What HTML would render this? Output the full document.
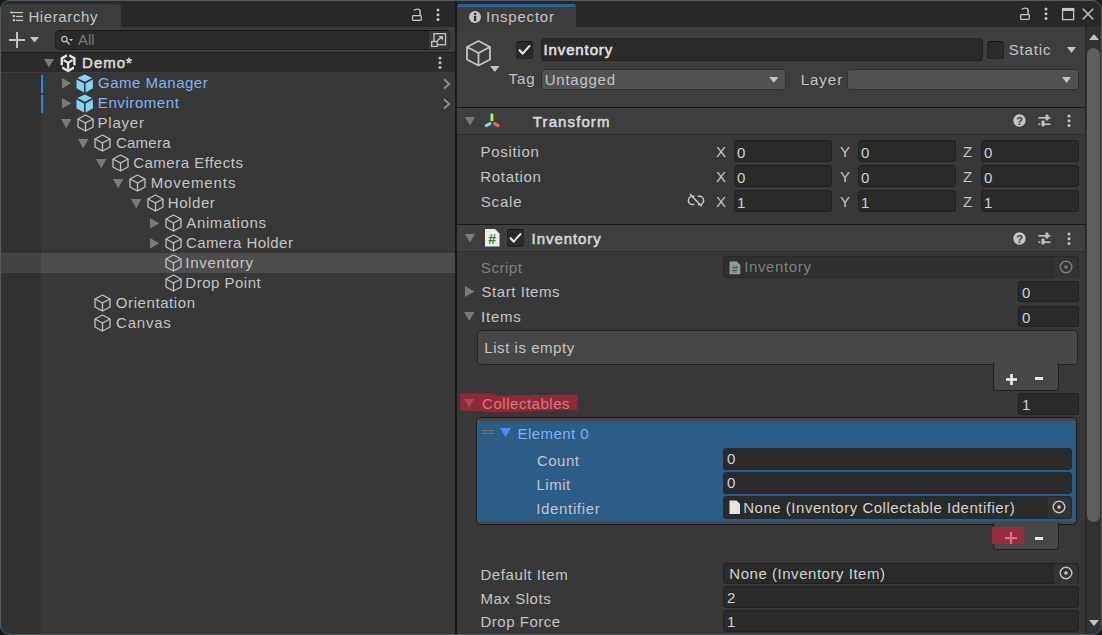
<!DOCTYPE html><html><head><meta charset="utf-8"><style>
html,body{margin:0;padding:0;width:1102px;height:635px;overflow:hidden;background:#1b1b1b;}
body{position:relative;font-family:"Liberation Sans",sans-serif;}
.r{position:absolute;display:block;}
.t{position:absolute;white-space:nowrap;line-height:20px;height:20px;font-size:15px;}
</style></head><body>
<div class="r" style="left:0px;top:0px;width:1102px;height:635px;background:#4a5761;border-radius:8px;"></div>
<div class="r" style="left:1px;top:1px;width:1100px;height:633px;background:#282828;border-radius:7px;overflow:hidden;"></div>
<div class="r" style="left:1px;top:4px;width:120px;height:23px;background:#3c3c3c;border-radius:6px 4px 0 0;"></div>
<svg class="r" style="left:9px;top:10px;" width="16" height="13" viewBox="0 0 16 13"><polygon points="0.7,2.5 3.4,0.8 3.4,4.1" fill="#c8c8c8"/><rect x="3.3" y="1.95" width="10.8" height="1.2" fill="#c8c8c8"/><rect x="3.8" y="5.1" width="2.2" height="2.1" fill="#c8c8c8"/><rect x="6.9" y="5.85" width="7.2" height="1.2" fill="#c8c8c8"/><rect x="3.8" y="9.1" width="2.2" height="2.1" fill="#c8c8c8"/><rect x="6.9" y="9.8" width="7.2" height="1.25" fill="#c8c8c8"/></svg>
<div class="t" style="left:28.45px;top:6.5px;color:#c4c4c4;font-size:15px;letter-spacing:0.601px;">Hierarchy</div>
<svg class="r" style="left:411px;top:8px;" width="12" height="14" viewBox="0 0 12 14"><rect x="1.6" y="7.5" width="8.7" height="4.9" rx="0.8" fill="none" stroke="#c8c8c8" stroke-width="1.25"/><path d="M2.9 2.6 Q4.6 0.9 6.8 1.1 Q9.1 1.2 9.1 3.4 L9.1 7.3" fill="none" stroke="#c8c8c8" stroke-width="1.4"/></svg>
<svg class="r" style="left:435px;top:8px;" width="6" height="14" viewBox="0 0 6 14"><circle cx="3" cy="2.0" r="1.5" fill="#c4c4c4"/><circle cx="3" cy="6.7" r="1.5" fill="#c4c4c4"/><circle cx="3" cy="11.4" r="1.5" fill="#c4c4c4"/></svg>
<div class="r" style="left:1px;top:27px;width:454px;height:25px;background:#3c3c3c;"></div>
<div class="r" style="left:9px;top:39px;width:15.5px;height:2px;background:#c4c4c4;"></div>
<div class="r" style="left:15.8px;top:32.3px;width:2px;height:15.4px;background:#c4c4c4;"></div>
<svg class="r" style="left:30px;top:37px;" width="9" height="5.5" viewBox="0 0 9 5.5"><polygon points="0,0 9,0 4.5,5.5" fill="#c4c4c4"/></svg>
<div class="r" style="left:55px;top:30px;width:395px;height:19.8px;background:#2a2a2a;border-radius:5px;border:1px solid #202020;border-top-color:#151515;box-sizing:border-box;"></div>
<div class="r" style="left:428.5px;top:31px;width:20.5px;height:18px;background:#393939;border-radius:0 4px 4px 0;"></div>
<svg class="r" style="left:60px;top:35px;" width="14" height="11" viewBox="0 0 14 11"><circle cx="4.4" cy="4.1" r="2.7" fill="none" stroke="#c4c4c4" stroke-width="1.3"/><line x1="6.3" y1="6.1" x2="9.6" y2="9.6" stroke="#c4c4c4" stroke-width="1.5"/><polygon points="9,4 13,4 11,6.3" fill="#c4c4c4"/></svg>
<div class="t" style="left:77.88px;top:30px;color:#787878;font-size:15px;letter-spacing:0.000px;">All</div>
<svg class="r" style="left:431px;top:33px;" width="16" height="14" viewBox="0 0 16 14"><rect x="3" y="0.7" width="11.5" height="11" fill="none" stroke="#c4c4c4" stroke-width="1.3"/><rect x="0.7" y="8.5" width="5.5" height="5" fill="#3a3a3a" stroke="#c4c4c4" stroke-width="1.3"/><line x1="6" y1="8" x2="11" y2="3.5" stroke="#c4c4c4" stroke-width="1.4"/><polygon points="7.5,3 12,3 12,7.5" fill="#c4c4c4"/></svg>
<div class="r" style="left:1px;top:52px;width:454px;height:583px;background:#383838;"></div>
<div class="r" style="left:1px;top:52px;width:454px;height:20px;background:#2b2b2b;"></div>
<div class="r" style="left:1px;top:72px;width:454px;height:1px;background:#3d3d3d;"></div>
<div class="r" style="left:1px;top:52px;width:454px;height:1px;background:#1f1f1f;"></div>
<svg class="r" style="left:44px;top:59px;" width="10" height="8.5" viewBox="0 0 10 8.5"><polygon points="0,0 10,0 5.0,8.5" fill="#7a7a7a"/></svg>
<svg class="r" style="left:56px;top:52px;" width="24" height="22" viewBox="0 0 24 22"><g fill="#e6e6e6" stroke="none"><polygon points="4.6,13.2 4.6,5.6 10.6,2.2 11.3,4.6 7.0,7.0 7.0,13.2"/><polygon points="19.6,13.2 19.6,5.6 13.6,2.2 12.9,4.6 17.2,7.0 17.2,13.2"/><polygon points="8.2,7.2 12.1,9.4 16.0,7.2 17.2,9.0 13.3,11.2 13.3,17.5 10.9,17.5 10.9,11.2 7.0,9.0"/><polygon points="6.2,14.2 12.1,17.6 18.0,14.2 18.0,17.0 12.1,20.2 6.2,17.0"/></g></svg>
<div class="t" style="left:82.11px;top:52.5px;color:#d8d8d8;-webkit-text-stroke:0.55px currentColor;font-size:15px;letter-spacing:0.999px;">Demo*</div>
<svg class="r" style="left:437px;top:56.2px;" width="6" height="14" viewBox="0 0 6 14"><circle cx="3" cy="2.0" r="1.5" fill="#c4c4c4"/><circle cx="3" cy="6.7" r="1.5" fill="#c4c4c4"/><circle cx="3" cy="11.4" r="1.5" fill="#c4c4c4"/></svg>
<svg class="r" style="left:62.400000000000006px;top:77.8px;" width="9.2" height="10.6" viewBox="0 0 9.2 10.6"><polygon points="0,0 9.2,5.3 0,10.6" fill="#7a7a7a"/></svg>
<svg class="r" style="left:76.4px;top:73.6px;" width="18" height="19" viewBox="0 0 18 19"><polygon points="8.8,0.6 16.2,4.1 8.8,7.8 1.3,4.1" fill="#80d4fa"/><polygon points="0.5,5.6 8.0,9.4 8.0,18.4 0.5,14.3" fill="#80d4fa"/><polygon points="9.6,9.4 16.9,5.6 16.9,14.3 9.6,18.4" fill="#80d4fa"/></svg>
<div class="r" style="left:41px;top:74.5px;width:2px;height:18px;background:#1b8fdc;"></div>
<svg class="r" style="left:441.5px;top:78.3px;" width="9" height="12" viewBox="0 0 9 12"><polyline points="2,1.2 7.3,5.9 2,10.6" fill="none" stroke="#8c8c8c" stroke-width="2"/></svg>
<div class="t" style="left:98.08px;top:73px;color:#80b4f8;font-size:15px;letter-spacing:0.491px;">Game Manager</div>
<svg class="r" style="left:62.400000000000006px;top:97.8px;" width="9.2" height="10.6" viewBox="0 0 9.2 10.6"><polygon points="0,0 9.2,5.3 0,10.6" fill="#7a7a7a"/></svg>
<svg class="r" style="left:76.4px;top:93.6px;" width="18" height="19" viewBox="0 0 18 19"><polygon points="8.8,0.6 16.2,4.1 8.8,7.8 1.3,4.1" fill="#80d4fa"/><polygon points="0.5,5.6 8.0,9.4 8.0,18.4 0.5,14.3" fill="#80d4fa"/><polygon points="9.6,9.4 16.9,5.6 16.9,14.3 9.6,18.4" fill="#80d4fa"/></svg>
<div class="r" style="left:41px;top:94.5px;width:2px;height:18px;background:#1b8fdc;"></div>
<svg class="r" style="left:441.5px;top:98.3px;" width="9" height="12" viewBox="0 0 9 12"><polyline points="2,1.2 7.3,5.9 2,10.6" fill="none" stroke="#8c8c8c" stroke-width="2"/></svg>
<div class="t" style="left:97.85px;top:93px;color:#80b4f8;font-size:15px;letter-spacing:0.573px;">Enviroment</div>
<svg class="r" style="left:60.6px;top:118.6px;" width="10.4" height="9.4" viewBox="0 0 10.4 9.4"><polygon points="0,0 10.4,0 5.2,9.4" fill="#7a7a7a"/></svg>
<svg class="r" style="left:76.7px;top:114px;" width="17" height="18" viewBox="0 0 17 18"><polygon points="8.5,1 16,5 16,13 8.5,17 1,13 1,5" fill="none" stroke="#c2c2c2" stroke-width="1.3" stroke-linejoin="round"/><polyline points="1,5 8.5,9 16,5" fill="none" stroke="#c2c2c2" stroke-width="1.3" stroke-linejoin="round"/><line x1="8.5" y1="9" x2="8.5" y2="17" stroke="#c2c2c2" stroke-width="1.3"/></svg>
<div class="t" style="left:97.55px;top:113px;color:#c4c4c4;font-size:15px;letter-spacing:0.769px;">Player</div>
<svg class="r" style="left:78.16px;top:138.6px;" width="10.4" height="9.4" viewBox="0 0 10.4 9.4"><polygon points="0,0 10.4,0 5.2,9.4" fill="#7a7a7a"/></svg>
<svg class="r" style="left:94.26px;top:134px;" width="17" height="18" viewBox="0 0 17 18"><polygon points="8.5,1 16,5 16,13 8.5,17 1,13 1,5" fill="none" stroke="#c2c2c2" stroke-width="1.3" stroke-linejoin="round"/><polyline points="1,5 8.5,9 16,5" fill="none" stroke="#c2c2c2" stroke-width="1.3" stroke-linejoin="round"/><line x1="8.5" y1="9" x2="8.5" y2="17" stroke="#c2c2c2" stroke-width="1.3"/></svg>
<div class="t" style="left:115.88px;top:133px;color:#c4c4c4;font-size:15px;letter-spacing:0.276px;">Camera</div>
<svg class="r" style="left:95.72px;top:158.6px;" width="10.4" height="9.4" viewBox="0 0 10.4 9.4"><polygon points="0,0 10.4,0 5.2,9.4" fill="#7a7a7a"/></svg>
<svg class="r" style="left:111.82px;top:154px;" width="17" height="18" viewBox="0 0 17 18"><polygon points="8.5,1 16,5 16,13 8.5,17 1,13 1,5" fill="none" stroke="#c2c2c2" stroke-width="1.3" stroke-linejoin="round"/><polyline points="1,5 8.5,9 16,5" fill="none" stroke="#c2c2c2" stroke-width="1.3" stroke-linejoin="round"/><line x1="8.5" y1="9" x2="8.5" y2="17" stroke="#c2c2c2" stroke-width="1.3"/></svg>
<div class="t" style="left:133.18px;top:153px;color:#c4c4c4;font-size:15px;letter-spacing:0.511px;">Camera Effects</div>
<svg class="r" style="left:113.28px;top:178.6px;" width="10.4" height="9.4" viewBox="0 0 10.4 9.4"><polygon points="0,0 10.4,0 5.2,9.4" fill="#7a7a7a"/></svg>
<svg class="r" style="left:129.38px;top:174px;" width="17" height="18" viewBox="0 0 17 18"><polygon points="8.5,1 16,5 16,13 8.5,17 1,13 1,5" fill="none" stroke="#c2c2c2" stroke-width="1.3" stroke-linejoin="round"/><polyline points="1,5 8.5,9 16,5" fill="none" stroke="#c2c2c2" stroke-width="1.3" stroke-linejoin="round"/><line x1="8.5" y1="9" x2="8.5" y2="17" stroke="#c2c2c2" stroke-width="1.3"/></svg>
<div class="t" style="left:150.65px;top:173px;color:#c4c4c4;font-size:15px;letter-spacing:0.909px;">Movements</div>
<svg class="r" style="left:130.84px;top:198.6px;" width="10.4" height="9.4" viewBox="0 0 10.4 9.4"><polygon points="0,0 10.4,0 5.2,9.4" fill="#7a7a7a"/></svg>
<svg class="r" style="left:146.94px;top:194px;" width="17" height="18" viewBox="0 0 17 18"><polygon points="8.5,1 16,5 16,13 8.5,17 1,13 1,5" fill="none" stroke="#c2c2c2" stroke-width="1.3" stroke-linejoin="round"/><polyline points="1,5 8.5,9 16,5" fill="none" stroke="#c2c2c2" stroke-width="1.3" stroke-linejoin="round"/><line x1="8.5" y1="9" x2="8.5" y2="17" stroke="#c2c2c2" stroke-width="1.3"/></svg>
<div class="t" style="left:167.85px;top:193px;color:#c4c4c4;font-size:15px;letter-spacing:0.548px;">Holder</div>
<svg class="r" style="left:150.2px;top:217.8px;" width="9.2" height="10.6" viewBox="0 0 9.2 10.6"><polygon points="0,0 9.2,5.3 0,10.6" fill="#7a7a7a"/></svg>
<svg class="r" style="left:164.5px;top:214px;" width="17" height="18" viewBox="0 0 17 18"><polygon points="8.5,1 16,5 16,13 8.5,17 1,13 1,5" fill="none" stroke="#c2c2c2" stroke-width="1.3" stroke-linejoin="round"/><polyline points="1,5 8.5,9 16,5" fill="none" stroke="#c2c2c2" stroke-width="1.3" stroke-linejoin="round"/><line x1="8.5" y1="9" x2="8.5" y2="17" stroke="#c2c2c2" stroke-width="1.3"/></svg>
<div class="t" style="left:186.35px;top:213px;color:#c4c4c4;font-size:15px;letter-spacing:0.599px;">Animations</div>
<svg class="r" style="left:150.2px;top:237.8px;" width="9.2" height="10.6" viewBox="0 0 9.2 10.6"><polygon points="0,0 9.2,5.3 0,10.6" fill="#7a7a7a"/></svg>
<svg class="r" style="left:164.5px;top:234px;" width="17" height="18" viewBox="0 0 17 18"><polygon points="8.5,1 16,5 16,13 8.5,17 1,13 1,5" fill="none" stroke="#c2c2c2" stroke-width="1.3" stroke-linejoin="round"/><polyline points="1,5 8.5,9 16,5" fill="none" stroke="#c2c2c2" stroke-width="1.3" stroke-linejoin="round"/><line x1="8.5" y1="9" x2="8.5" y2="17" stroke="#c2c2c2" stroke-width="1.3"/></svg>
<div class="t" style="left:185.88px;top:233px;color:#c4c4c4;font-size:15px;letter-spacing:0.441px;">Camera Holder</div>
<div class="r" style="left:1px;top:253px;width:454px;height:20px;background:#4d4d4d;"></div>
<svg class="r" style="left:164.5px;top:254px;" width="17" height="18" viewBox="0 0 17 18"><polygon points="8.5,1 16,5 16,13 8.5,17 1,13 1,5" fill="none" stroke="#c2c2c2" stroke-width="1.3" stroke-linejoin="round"/><polyline points="1,5 8.5,9 16,5" fill="none" stroke="#c2c2c2" stroke-width="1.3" stroke-linejoin="round"/><line x1="8.5" y1="9" x2="8.5" y2="17" stroke="#c2c2c2" stroke-width="1.3"/></svg>
<div class="t" style="left:185.22px;top:253px;color:#c4c4c4;font-size:15px;letter-spacing:0.753px;">Inventory</div>
<svg class="r" style="left:164.5px;top:274px;" width="17" height="18" viewBox="0 0 17 18"><polygon points="8.5,1 16,5 16,13 8.5,17 1,13 1,5" fill="none" stroke="#c2c2c2" stroke-width="1.3" stroke-linejoin="round"/><polyline points="1,5 8.5,9 16,5" fill="none" stroke="#c2c2c2" stroke-width="1.3" stroke-linejoin="round"/><line x1="8.5" y1="9" x2="8.5" y2="17" stroke="#c2c2c2" stroke-width="1.3"/></svg>
<div class="t" style="left:185.35px;top:273px;color:#c4c4c4;font-size:15px;letter-spacing:0.495px;">Drop Point</div>
<svg class="r" style="left:94.26px;top:294px;" width="17" height="18" viewBox="0 0 17 18"><polygon points="8.5,1 16,5 16,13 8.5,17 1,13 1,5" fill="none" stroke="#c2c2c2" stroke-width="1.3" stroke-linejoin="round"/><polyline points="1,5 8.5,9 16,5" fill="none" stroke="#c2c2c2" stroke-width="1.3" stroke-linejoin="round"/><line x1="8.5" y1="9" x2="8.5" y2="17" stroke="#c2c2c2" stroke-width="1.3"/></svg>
<div class="t" style="left:115.81px;top:293px;color:#c4c4c4;font-size:15px;letter-spacing:0.586px;">Orientation</div>
<svg class="r" style="left:94.26px;top:314px;" width="17" height="18" viewBox="0 0 17 18"><polygon points="8.5,1 16,5 16,13 8.5,17 1,13 1,5" fill="none" stroke="#c2c2c2" stroke-width="1.3" stroke-linejoin="round"/><polyline points="1,5 8.5,9 16,5" fill="none" stroke="#c2c2c2" stroke-width="1.3" stroke-linejoin="round"/><line x1="8.5" y1="9" x2="8.5" y2="17" stroke="#c2c2c2" stroke-width="1.3"/></svg>
<div class="t" style="left:116.08px;top:313px;color:#c4c4c4;font-size:15px;letter-spacing:0.775px;">Canvas</div>
<div class="r" style="left:1px;top:73px;width:40px;height:562px;background:rgba(0,0,0,0.11);"></div>
<div class="r" style="left:455px;top:1px;width:2px;height:634px;background:#191919;"></div>
<div class="r" style="left:457px;top:27px;width:645px;height:608px;background:#383838;"></div>
<div class="r" style="left:457px;top:4px;width:119px;height:23px;background:#3c3c3c;border-radius:5px 5px 0 0;"></div>
<div class="r" style="left:457px;top:4px;width:119px;height:3px;background:#2f6197;border-radius:5px 5px 0 0;"></div>
<svg class="r" style="left:469px;top:11px;" width="12" height="12" viewBox="0 0 12 12"><circle cx="6" cy="6" r="6" fill="#c4c4c4"/><rect x="5" y="5" width="2.2" height="5" fill="#2a2a2a"/><circle cx="6.1" cy="3" r="1.2" fill="#2a2a2a"/></svg>
<div class="t" style="left:486.02px;top:6.5px;color:#c4c4c4;font-size:15px;letter-spacing:0.782px;">Inspector</div>
<svg class="r" style="left:1019px;top:6.5px;" width="12" height="14" viewBox="0 0 12 14"><rect x="1.6" y="7.5" width="8.7" height="4.9" rx="0.8" fill="none" stroke="#c8c8c8" stroke-width="1.25"/><path d="M2.9 2.6 Q4.6 0.9 6.8 1.1 Q9.1 1.2 9.1 3.4 L9.1 7.3" fill="none" stroke="#c8c8c8" stroke-width="1.4"/></svg>
<svg class="r" style="left:1043px;top:7.199999999999999px;" width="6" height="14" viewBox="0 0 6 14"><circle cx="3" cy="2.0" r="1.5" fill="#c4c4c4"/><circle cx="3" cy="6.7" r="1.5" fill="#c4c4c4"/><circle cx="3" cy="11.4" r="1.5" fill="#c4c4c4"/></svg>
<svg class="r" style="left:1061px;top:7px;" width="14" height="14" viewBox="0 0 14 14"><rect x="1.6" y="1.6" width="11" height="11" fill="none" stroke="#c4c4c4" stroke-width="1.3"/><rect x="1" y="1" width="12.3" height="3" fill="#c4c4c4"/></svg>
<svg class="r" style="left:1082px;top:8px;" width="12" height="12" viewBox="0 0 12 12"><line x1="0.8" y1="0.8" x2="11.2" y2="11.2" stroke="#c4c4c4" stroke-width="1.5"/><line x1="11.2" y1="0.8" x2="0.8" y2="11.2" stroke="#c4c4c4" stroke-width="1.5"/></svg>
<div class="r" style="left:457px;top:27px;width:629px;height:80px;background:#3e3e3e;"></div>
<svg class="r" style="left:465.5px;top:40px;" width="25" height="27" viewBox="0 0 25 27"><g fill="none" stroke="#c4c4c4" stroke-width="1.8" stroke-linejoin="round"><polygon points="12.5,1 24,7 24,19.5 12.5,25.5 1,19.5 1,7"/><polyline points="1,7 12.5,13 24,7"/><line x1="12.5" y1="13" x2="12.5" y2="25.5"/></g></svg>
<svg class="r" style="left:490px;top:66px;" width="9.5" height="6" viewBox="0 0 9.5 6"><polygon points="0,0 9.5,0 4.75,6" fill="#c4c4c4"/></svg>
<div class="r" style="left:516px;top:41px;width:17px;height:17.6px;background:#2a2a2a;border-radius:3px;border:1px solid #222;border-top-color:#141414;box-sizing:border-box;"></div>
<svg class="r" style="left:516px;top:41px;" width="17" height="17" viewBox="0 0 17 17"><polyline points="3.6,9.2 6.6,12.6 13.4,5.1" fill="none" stroke="#ececec" stroke-width="2.1" stroke-linecap="round" stroke-linejoin="round"/></svg>
<div class="r" style="left:541px;top:38px;width:442px;height:23px;background:#2a2a2a;border:1px solid #212121;box-sizing:border-box;border-radius:3px;"></div>
<div class="t" style="left:543.51px;top:39.5px;color:#e0e0e0;-webkit-text-stroke:0.55px currentColor;font-size:15px;letter-spacing:0.879px;">Inventory</div>
<div class="r" style="left:987px;top:41px;width:17px;height:17.6px;background:#2a2a2a;border-radius:3px;border:1px solid #222;border-top-color:#141414;box-sizing:border-box;"></div>
<div class="t" style="left:1008.77px;top:40px;color:#c4c4c4;font-size:15px;letter-spacing:0.820px;">Static</div>
<svg class="r" style="left:1067px;top:46.5px;" width="9" height="6" viewBox="0 0 9 6"><polygon points="0,0 9,0 4.5,6" fill="#c4c4c4"/></svg>
<div class="t" style="left:508.44px;top:69px;color:#c4c4c4;font-size:15px;letter-spacing:1.000px;">Tag</div>
<div class="r" style="left:541px;top:68.5px;width:245px;height:21.7px;background:#515151;border:1px solid #303030;box-sizing:border-box;border-radius:3px;"></div>
<div class="t" style="left:544.79px;top:70px;color:#c4c4c4;font-size:15px;letter-spacing:0.743px;">Untagged</div>
<svg class="r" style="left:768.7px;top:77px;" width="9.6" height="5.8" viewBox="0 0 9.6 5.8"><polygon points="0,0 9.6,0 4.8,5.8" fill="#c4c4c4"/></svg>
<div class="t" style="left:800.67px;top:69.5px;color:#c4c4c4;font-size:15px;letter-spacing:1.000px;">Layer</div>
<div class="r" style="left:847px;top:68.5px;width:232px;height:21.7px;background:#515151;border:1px solid #303030;box-sizing:border-box;border-radius:3px;"></div>
<svg class="r" style="left:1062px;top:77px;" width="9" height="6" viewBox="0 0 9 6"><polygon points="0,0 9,0 4.5,6" fill="#c4c4c4"/></svg>
<div class="r" style="left:457px;top:107px;width:629px;height:1px;background:#1a1a1a;"></div>
<div class="r" style="left:457px;top:108px;width:629px;height:26px;background:#3e3e3e;"></div>
<div class="r" style="left:457px;top:134px;width:629px;height:1px;background:#2e2e2e;"></div>
<svg class="r" style="left:465px;top:117px;" width="10" height="8.5" viewBox="0 0 10 8.5"><polygon points="0,0 10,0 5.0,8.5" fill="#7a7a7a"/></svg>
<svg class="r" style="left:483px;top:112px;" width="18" height="16" viewBox="0 0 18 16"><g stroke-linecap="round" stroke-width="3"><line x1="8.9" y1="2.8" x2="8.9" y2="7.7" stroke="#a6f54a"/><line x1="3.3" y1="13.6" x2="6.9" y2="11.6" stroke="#7fd6fb"/><line x1="11.5" y1="11.6" x2="15.1" y2="13.6" stroke="#f76a3a"/></g></svg>
<div class="t" style="left:532.85px;top:112px;color:#d8d8d8;-webkit-text-stroke:0.55px currentColor;font-size:15px;letter-spacing:1.100px;">Transform</div>
<svg class="r" style="left:1012.5px;top:113.7px;" width="13" height="13" viewBox="0 0 13 13"><circle cx="6.5" cy="6.5" r="6.2" fill="#c4c4c4"/><text x="6.5" y="10.6" font-family="Liberation Sans" font-weight="bold" font-size="11" text-anchor="middle" fill="#3e3e3e">?</text></svg>
<svg class="r" style="left:1037.5px;top:113.7px;" width="13" height="13" viewBox="0 0 13 13"><g fill="#c4c4c4"><rect x="0.5" y="3" width="12" height="1.6"/><rect x="7.5" y="0.5" width="3" height="6" rx="1"/><rect x="0.5" y="9.4" width="1.8" height="1.6"/><rect x="4" y="9.4" width="8.5" height="1.6"/><rect x="3.5" y="6.5" width="3" height="6" rx="1"/></g></svg>
<svg class="r" style="left:1066px;top:113.7px;" width="6" height="14" viewBox="0 0 6 14"><circle cx="3" cy="2.0" r="1.5" fill="#c4c4c4"/><circle cx="3" cy="6.7" r="1.5" fill="#c4c4c4"/><circle cx="3" cy="11.4" r="1.5" fill="#c4c4c4"/></svg>
<div class="t" style="left:480.45px;top:142px;color:#c4c4c4;font-size:15px;letter-spacing:0.717px;">Position</div>
<div class="t" style="left:716.00px;top:142px;color:#c4c4c4;font-size:15px;letter-spacing:0.500px;">X</div>
<div class="r" style="left:734px;top:140px;width:98px;height:22px;background:#2a2a2a;border:1px solid #212121;box-sizing:border-box;border-radius:3px;"></div>
<div class="t" style="left:737.00px;top:142.5px;color:#d2d2d2;font-size:15px;letter-spacing:0.500px;">0</div>
<div class="t" style="left:840.00px;top:142px;color:#c4c4c4;font-size:15px;letter-spacing:0.500px;">Y</div>
<div class="r" style="left:858px;top:140px;width:98px;height:22px;background:#2a2a2a;border:1px solid #212121;box-sizing:border-box;border-radius:3px;"></div>
<div class="t" style="left:861.00px;top:142.5px;color:#d2d2d2;font-size:15px;letter-spacing:0.500px;">0</div>
<div class="t" style="left:963.00px;top:142px;color:#c4c4c4;font-size:15px;letter-spacing:0.500px;">Z</div>
<div class="r" style="left:981px;top:140px;width:98px;height:22px;background:#2a2a2a;border:1px solid #212121;box-sizing:border-box;border-radius:3px;"></div>
<div class="t" style="left:984.00px;top:142.5px;color:#d2d2d2;font-size:15px;letter-spacing:0.500px;">0</div>
<div class="t" style="left:480.35px;top:167px;color:#c4c4c4;font-size:15px;letter-spacing:0.672px;">Rotation</div>
<div class="t" style="left:716.00px;top:167px;color:#c4c4c4;font-size:15px;letter-spacing:0.500px;">X</div>
<div class="r" style="left:734px;top:165px;width:98px;height:22px;background:#2a2a2a;border:1px solid #212121;box-sizing:border-box;border-radius:3px;"></div>
<div class="t" style="left:737.00px;top:167.5px;color:#d2d2d2;font-size:15px;letter-spacing:0.500px;">0</div>
<div class="t" style="left:840.00px;top:167px;color:#c4c4c4;font-size:15px;letter-spacing:0.500px;">Y</div>
<div class="r" style="left:858px;top:165px;width:98px;height:22px;background:#2a2a2a;border:1px solid #212121;box-sizing:border-box;border-radius:3px;"></div>
<div class="t" style="left:861.00px;top:167.5px;color:#d2d2d2;font-size:15px;letter-spacing:0.500px;">0</div>
<div class="t" style="left:963.00px;top:167px;color:#c4c4c4;font-size:15px;letter-spacing:0.500px;">Z</div>
<div class="r" style="left:981px;top:165px;width:98px;height:22px;background:#2a2a2a;border:1px solid #212121;box-sizing:border-box;border-radius:3px;"></div>
<div class="t" style="left:984.00px;top:167.5px;color:#d2d2d2;font-size:15px;letter-spacing:0.500px;">0</div>
<div class="t" style="left:480.77px;top:192px;color:#c4c4c4;font-size:15px;letter-spacing:0.814px;">Scale</div>
<div class="t" style="left:716.00px;top:192px;color:#c4c4c4;font-size:15px;letter-spacing:0.500px;">X</div>
<div class="r" style="left:734px;top:190px;width:98px;height:22px;background:#2a2a2a;border:1px solid #212121;box-sizing:border-box;border-radius:3px;"></div>
<div class="t" style="left:737.00px;top:192.5px;color:#d2d2d2;font-size:15px;letter-spacing:0.500px;">1</div>
<div class="t" style="left:840.00px;top:192px;color:#c4c4c4;font-size:15px;letter-spacing:0.500px;">Y</div>
<div class="r" style="left:858px;top:190px;width:98px;height:22px;background:#2a2a2a;border:1px solid #212121;box-sizing:border-box;border-radius:3px;"></div>
<div class="t" style="left:861.00px;top:192.5px;color:#d2d2d2;font-size:15px;letter-spacing:0.500px;">1</div>
<div class="t" style="left:963.00px;top:192px;color:#c4c4c4;font-size:15px;letter-spacing:0.500px;">Z</div>
<div class="r" style="left:981px;top:190px;width:98px;height:22px;background:#2a2a2a;border:1px solid #212121;box-sizing:border-box;border-radius:3px;"></div>
<div class="t" style="left:984.00px;top:192.5px;color:#d2d2d2;font-size:15px;letter-spacing:0.500px;">1</div>
<svg class="r" style="left:686px;top:192px;" width="20" height="17" viewBox="0 0 20 17"><g fill="none" stroke="#c8c8c8" stroke-width="1.5"><path d="M8.3 4.2 H6.6 a4.2 4.2 0 0 0 0 8.4 H8.3"/><path d="M11.7 4.2 H13.4 a4.2 4.2 0 0 1 0 8.4 H11.7"/><line x1="4" y1="2" x2="15.8" y2="14.5"/></g></svg>
<div class="r" style="left:457px;top:224px;width:629px;height:1px;background:#1a1a1a;"></div>
<div class="r" style="left:457px;top:225px;width:629px;height:26px;background:#3e3e3e;"></div>
<div class="r" style="left:457px;top:251px;width:629px;height:1px;background:#2e2e2e;"></div>
<svg class="r" style="left:465px;top:234px;" width="10" height="8.5" viewBox="0 0 10 8.5"><polygon points="0,0 10,0 5.0,8.5" fill="#7a7a7a"/></svg>
<svg class="r" style="left:485px;top:229px;" width="15" height="18" viewBox="0 0 15 18"><path d="M0 0 H10 L14.5 4.5 V17.5 H0 Z" fill="#ededed"/><text x="7.2" y="14.5" font-family="Liberation Sans" font-weight="bold" font-size="14" text-anchor="middle" fill="#3a7f3a">#</text></svg>
<div class="r" style="left:507px;top:229px;width:17px;height:17.6px;background:#2a2a2a;border-radius:3px;border:1px solid #222;border-top-color:#141414;box-sizing:border-box;"></div>
<svg class="r" style="left:507px;top:229px;" width="17" height="17" viewBox="0 0 17 17"><polyline points="3.6,9.2 6.6,12.6 13.4,5.1" fill="none" stroke="#ececec" stroke-width="2.1" stroke-linecap="round" stroke-linejoin="round"/></svg>
<div class="t" style="left:531.61px;top:228.5px;color:#d8d8d8;-webkit-text-stroke:0.55px currentColor;font-size:15px;letter-spacing:0.929px;">Inventory</div>
<svg class="r" style="left:1012.5px;top:231.5px;" width="13" height="13" viewBox="0 0 13 13"><circle cx="6.5" cy="6.5" r="6.2" fill="#c4c4c4"/><text x="6.5" y="10.6" font-family="Liberation Sans" font-weight="bold" font-size="11" text-anchor="middle" fill="#3e3e3e">?</text></svg>
<svg class="r" style="left:1037.5px;top:231.5px;" width="13" height="13" viewBox="0 0 13 13"><g fill="#c4c4c4"><rect x="0.5" y="3" width="12" height="1.6"/><rect x="7.5" y="0.5" width="3" height="6" rx="1"/><rect x="0.5" y="9.4" width="1.8" height="1.6"/><rect x="4" y="9.4" width="8.5" height="1.6"/><rect x="3.5" y="6.5" width="3" height="6" rx="1"/></g></svg>
<svg class="r" style="left:1066px;top:231.5px;" width="6" height="14" viewBox="0 0 6 14"><circle cx="3" cy="2.0" r="1.5" fill="#c4c4c4"/><circle cx="3" cy="6.7" r="1.5" fill="#c4c4c4"/><circle cx="3" cy="11.4" r="1.5" fill="#c4c4c4"/></svg>
<div class="t" style="left:480.87px;top:258px;color:#808080;font-size:15px;letter-spacing:0.544px;">Script</div>
<div class="r" style="left:723px;top:256.3px;width:356px;height:22px;background:#2f2f2f;border:1px solid #282828;box-sizing:border-box;border-radius:3px;"></div>
<div class="r" style="left:1054px;top:258px;width:24px;height:20px;background:#333333;border-radius:0 3px 3px 0;"></div>
<svg class="r" style="left:728.5px;top:260.8px;" width="12" height="14" viewBox="0 0 12 14"><path d="M0.5 0.5 H7.8 L11.3 4 V13.3 H0.5 Z" fill="#9a9a9a"/><text x="5.9" y="11.6" font-family="Liberation Sans" font-weight="bold" font-size="11" text-anchor="middle" fill="#3f6a3f">#</text></svg>
<div class="t" style="left:744.22px;top:257.3px;color:#808080;font-size:15px;letter-spacing:0.628px;">Inventory</div>
<svg class="r" style="left:1059px;top:260px;" width="14" height="14" viewBox="0 0 14 14"><circle cx="7" cy="7" r="5.8" fill="none" stroke="#808080" stroke-width="1.4"/><circle cx="7" cy="7" r="1.8" fill="#808080"/></svg>
<svg class="r" style="left:465px;top:285.5px;" width="9.5" height="11" viewBox="0 0 9.5 11"><polygon points="0,0 9.5,5.5 0,11" fill="#7a7a7a"/></svg>
<div class="t" style="left:481.57px;top:281.5px;color:#c4c4c4;font-size:15px;letter-spacing:0.545px;">Start Items</div>
<div class="r" style="left:1018px;top:281px;width:61px;height:21px;background:#2a2a2a;border:1px solid #212121;box-sizing:border-box;border-radius:3px;"></div>
<div class="t" style="left:1022.00px;top:283px;color:#d2d2d2;font-size:15px;letter-spacing:0.500px;">0</div>
<svg class="r" style="left:464px;top:312.3px;" width="10.5" height="8.7" viewBox="0 0 10.5 8.7"><polygon points="0,0 10.5,0 5.25,8.7" fill="#7a7a7a"/></svg>
<div class="t" style="left:481.12px;top:307px;color:#c4c4c4;font-size:15px;letter-spacing:0.734px;">Items</div>
<div class="r" style="left:1018px;top:306px;width:61px;height:21px;background:#2a2a2a;border:1px solid #212121;box-sizing:border-box;border-radius:3px;"></div>
<div class="t" style="left:1022.00px;top:308px;color:#d2d2d2;font-size:15px;letter-spacing:0.500px;">0</div>
<div class="r" style="left:477px;top:330px;width:601px;height:35px;background:#474747;border:1px solid #232323;box-sizing:border-box;border-radius:4px;"></div>
<div class="t" style="left:484.35px;top:338px;color:#c4c4c4;font-size:15px;letter-spacing:0.542px;">List is empty</div>
<div class="r" style="left:992.5px;top:363px;width:66px;height:28px;background:#474747;border:1px solid #1f1f1f;border-top:none;box-sizing:border-box;border-radius:0 0 4px 4px;"></div>
<div class="r" style="left:993.5px;top:362px;width:64px;height:3px;background:#474747;"></div>
<svg class="r" style="left:1006px;top:374px;" width="11" height="11" viewBox="0 0 11 11"><rect x="0" y="4.2" width="11" height="2.6" fill="#ececec"/><rect x="4.2" y="0" width="2.6" height="11" fill="#ececec"/></svg>
<div class="r" style="left:1035px;top:377.2px;width:8px;height:3px;background:#ececec;"></div>
<svg class="r" style="left:460px;top:393px;" width="118" height="21" viewBox="0 0 118 21"><polygon points="0.3,0.8 9,0.2 34,0.5 37,2.6 62,2.2 117.2,1.4 117.5,16.8 90,17.6 60,18.6 30,19.6 27,18.4 0.3,17.6" fill="#902a3a"/></svg>
<svg class="r" style="left:464px;top:399px;" width="10" height="8.5" viewBox="0 0 10 8.5"><polygon points="0,0 10,0 5.0,8.5" fill="#a84a5a"/></svg>
<div class="t" style="left:482.08px;top:394px;color:#d67682;font-size:15px;letter-spacing:0.525px;">Collectables</div>
<div class="r" style="left:1018px;top:393px;width:61px;height:22px;background:#2a2a2a;border:1px solid #212121;box-sizing:border-box;border-radius:3px;"></div>
<div class="t" style="left:1022.00px;top:395px;color:#d2d2d2;font-size:15px;letter-spacing:0.500px;">1</div>
<div class="r" style="left:476px;top:417px;width:601px;height:108px;background:#474747;border:1px solid #1c1c1c;box-sizing:border-box;border-radius:4px;"></div>
<div class="r" style="left:477px;top:421px;width:599px;height:100px;background:#2c5d87;"></div>
<svg class="r" style="left:482px;top:430px;" width="12" height="5" viewBox="0 0 12 5"><rect x="0" y="0" width="12" height="1" fill="#7b6f66"/><rect x="0" y="3" width="12" height="1" fill="#7b6f66"/></svg>
<svg class="r" style="left:500px;top:428px;" width="11" height="9" viewBox="0 0 11 9"><polygon points="0,0 11,0 5.5,9" fill="#4a8ef0"/></svg>
<div class="t" style="left:517.55px;top:424px;color:#7fb0f0;font-size:15px;letter-spacing:0.442px;">Element 0</div>
<div class="t" style="left:536.98px;top:450.5px;color:#c4c4c4;font-size:15px;letter-spacing:0.481px;">Count</div>
<div class="r" style="left:723px;top:448px;width:349px;height:22px;background:#2a2a2a;border:1px solid #1f2a33;box-sizing:border-box;border-radius:3px;"></div>
<div class="t" style="left:727.00px;top:449px;color:#d2d2d2;font-size:15px;letter-spacing:0.500px;">0</div>
<div class="t" style="left:536.45px;top:474.5px;color:#c4c4c4;font-size:15px;letter-spacing:0.530px;">Limit</div>
<div class="r" style="left:723px;top:472px;width:349px;height:22px;background:#2a2a2a;border:1px solid #1f2a33;box-sizing:border-box;border-radius:3px;"></div>
<div class="t" style="left:727.00px;top:473px;color:#d2d2d2;font-size:15px;letter-spacing:0.500px;">0</div>
<div class="t" style="left:536.32px;top:498.5px;color:#c4c4c4;font-size:15px;letter-spacing:0.642px;">Identifier</div>
<div class="r" style="left:723px;top:496px;width:349px;height:23px;background:#2a2a2a;border:1px solid #1f2a33;box-sizing:border-box;border-radius:3px;"></div>
<div class="r" style="left:1048px;top:497px;width:23px;height:21px;background:#333333;border-radius:0 3px 3px 0;"></div>
<svg class="r" style="left:729px;top:500px;" width="12" height="15" viewBox="0 0 12 15"><path d="M0.5 0.5 H7.5 L11 4 V14 H0.5 Z" fill="#e4e4e4"/></svg>
<div class="t" style="left:743.25px;top:498px;color:#d2d2d2;font-size:15px;letter-spacing:0.517px;">None (Inventory Collectable Identifier)</div>
<svg class="r" style="left:1052px;top:500px;" width="14" height="14" viewBox="0 0 14 14"><circle cx="7" cy="7" r="5.8" fill="none" stroke="#c4c4c4" stroke-width="1.4"/><circle cx="7" cy="7" r="1.8" fill="#c4c4c4"/></svg>
<div class="r" style="left:992.5px;top:523px;width:66px;height:27px;background:#474747;border:1px solid #1f1f1f;border-top:none;box-sizing:border-box;border-radius:0 0 4px 4px;"></div>
<div class="r" style="left:993.5px;top:521px;width:64px;height:4px;background:#474747;"></div>
<div class="r" style="left:992px;top:527.2px;width:31.5px;height:16.5px;background:#972c3c;"></div>
<svg class="r" style="left:1005px;top:532px;" width="12" height="12" viewBox="0 0 12 12"><rect x="0" y="5" width="12" height="2.2" fill="#e07080"/><rect x="4.9" y="0" width="2.2" height="12" fill="#e07080"/></svg>
<div class="r" style="left:1035px;top:536.5px;width:8px;height:3px;background:#ececec;"></div>
<div class="t" style="left:480.45px;top:565px;color:#c4c4c4;font-size:15px;letter-spacing:0.584px;">Default Item</div>
<div class="r" style="left:723px;top:562.5px;width:356px;height:21px;background:#2a2a2a;border:1px solid #212121;box-sizing:border-box;border-radius:3px;"></div>
<div class="r" style="left:1054px;top:564px;width:24px;height:20px;background:#333333;border-radius:0 3px 3px 0;"></div>
<div class="t" style="left:729.35px;top:563.5px;color:#d2d2d2;font-size:15px;letter-spacing:0.530px;">None (Inventory Item)</div>
<svg class="r" style="left:1059px;top:566px;" width="14" height="14" viewBox="0 0 14 14"><circle cx="7" cy="7" r="5.8" fill="none" stroke="#c4c4c4" stroke-width="1.4"/><circle cx="7" cy="7" r="1.8" fill="#c4c4c4"/></svg>
<div class="t" style="left:480.45px;top:588.5px;color:#c4c4c4;font-size:15px;letter-spacing:0.550px;">Max Slots</div>
<div class="r" style="left:723px;top:586px;width:356px;height:21.5px;background:#2a2a2a;border:1px solid #212121;box-sizing:border-box;border-radius:3px;"></div>
<div class="t" style="left:727.00px;top:587.5px;color:#d2d2d2;font-size:15px;letter-spacing:0.500px;">2</div>
<div class="t" style="left:480.45px;top:612px;color:#c4c4c4;font-size:15px;letter-spacing:0.524px;">Drop Force</div>
<div class="r" style="left:723px;top:610px;width:356px;height:21.5px;background:#2a2a2a;border:1px solid #212121;box-sizing:border-box;border-radius:3px;"></div>
<div class="t" style="left:727.00px;top:611.5px;color:#d2d2d2;font-size:15px;letter-spacing:0.500px;">1</div>
<div class="r" style="left:1085px;top:27px;width:16px;height:607px;background:#323232;"></div>
<div class="r" style="left:1085px;top:27px;width:1px;height:607px;background:#262626;"></div>
<svg class="r" style="left:1089px;top:34px;" width="10" height="6" viewBox="0 0 10 6"><polygon points="0,6 10,6 5,0" fill="#c4c4c4"/></svg>
<div class="r" style="left:1087px;top:48px;width:13px;height:473.5px;background:#5e5e5e;border-radius:6.5px;"></div>
<svg class="r" style="left:1089px;top:620px;" width="10" height="6" viewBox="0 0 10 6"><polygon points="0,0 10,0 5,6" fill="#c4c4c4"/></svg>
<div class="r" style="left:0px;top:0px;width:1102px;height:635px;background:transparent;border:1px solid #4f5c65;box-sizing:border-box;border-radius:10px;box-shadow:0 0 0 12px #1b1b1b;"></div>
</body></html>
